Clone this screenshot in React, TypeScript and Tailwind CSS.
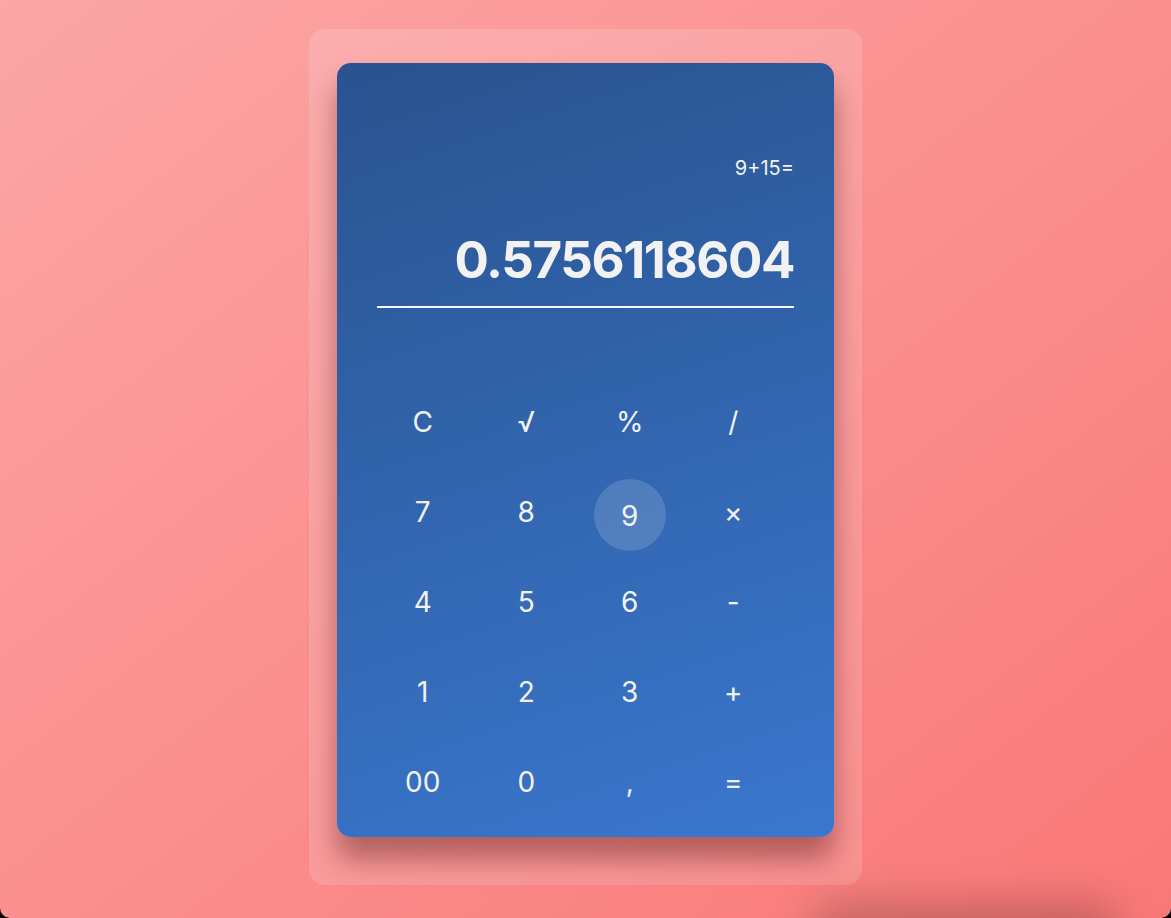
const keys = [
  "C", "√", "%", "/",
  "7", "8", "9", "×",
  "4", "5", "6", "-",
  "1", "2", "3", "+",
  "00", "0", ",", "=",
];

export default function App() {
  return (
    <div className="bg-black">
      <div className="relative h-[918px] w-full overflow-hidden rounded-b-[10px] bg-gradient-to-br from-[#fca6a6] via-[#fb8f8f] to-[#f97877] pt-[29px] font-['Inter',sans-serif]">
        {/* stray shadow bottom right */}
        <div className="pointer-events-none absolute bottom-[-44px] left-[810px] h-[60px] w-[310px] rounded-full bg-black/20 blur-[20px]" />

        <div className="mx-auto flex h-[856px] w-[553px] justify-center rounded-[16px] bg-white/15 pt-[34px]">
          <div className="flex h-[774px] w-[497px] flex-col rounded-[14px] bg-[linear-gradient(162deg,#29538f,#3a77ce)] px-[40px] text-[#f2f2f2] shadow-[0_22px_28px_rgba(60,0,0,0.38)]">
            <div className="mt-[93px] text-right text-[20px] leading-[24px]">9+15=</div>
            <div className="mt-[50px] text-right text-[51px] font-bold leading-[60px] tracking-[-1.4px]">
              0.5756118604
            </div>
            <div className="mt-[16px] h-[2px] bg-white" />
            <div className="-ml-[6px] mt-[69px] grid w-[414px] grid-cols-4">
              {keys.map((k) => (
                <div key={k} className="flex h-[90px] items-center justify-center">
                  <div
                    className={
                      "flex h-[72px] w-[72px] items-center justify-center rounded-full text-[28px] " +
                      (k === "9" ? "translate-y-[3px] bg-white/15 pt-[2px]" : "")
                    }
                  >
                    {k}
                  </div>
                </div>
              ))}
            </div>
          </div>
        </div>
      </div>
    </div>
  );
}
